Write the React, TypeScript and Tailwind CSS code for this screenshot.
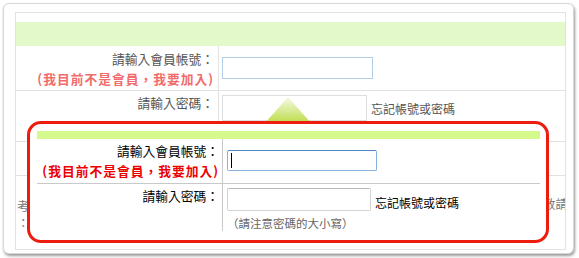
const font = "font-['Noto_Sans_CJK_TC','Noto_Sans_CJK_SC',sans-serif]";

function Caret() {
  return <div className="ml-[3px] mt-[2px] h-[15px] w-px bg-black" />;
}

// faded form underneath the callout
function BackForm() {
  return (
    <div className="flex h-[238px] w-[551px] flex-col border border-[#e2e2e2] bg-white">
      <div className="h-[9px]" />
      <div className="h-[24px] bg-[#e4f9c9]" />
      <div className="grid h-[45px] grid-cols-[203px_1fr] border-b border-[#e2e2e2]">
        <div className="border-r border-[#e2e2e2] pr-[4px] pt-[3px] text-right text-[12.75px] leading-[20px]">
          <div className="text-[#555]">請輸入會員帳號：</div>
          <div className="font-bold tracking-[1px] text-[#f26b6b]">(我目前不是會員，我要加入)</div>
        </div>
        <div className="pl-[3px] pt-[11px]">
          <div className="h-[22px] w-[151px] border border-[#b3cde6] bg-white" />
        </div>
      </div>
      <div className="grid h-[51px] grid-cols-[203px_1fr] border-b border-[#e2e2e2]">
        <div className="border-r border-[#e2e2e2] pr-[4px] pt-[2px] text-right text-[12.75px] leading-[20px] text-[#555]">
          請輸入密碼：
        </div>
        <div className="flex items-start pl-[3px] pt-[4px]">
          <div className="h-[26px] w-[145px] border border-[#dedede] bg-white" />
          <span className="ml-[4px] mt-[6px] text-[12px] leading-[16px] text-[#555]">忘記帳號或密碼</span>
        </div>
      </div>
      <div className="h-[34px] border-b border-[#e2e2e2]" />
      <div className="flex flex-1 justify-between overflow-hidden pt-[21px] text-[12.5px] leading-[17px] text-[#777]">
        <div className="pl-[1px]">
          <div>考</div>
          <div>：(</div>
        </div>
        <div className="-mr-[3px] -mt-[2px] whitespace-nowrap">敦請</div>
      </div>
    </div>
  );
}

function Pointer() {
  return (
    <svg className="absolute left-[265px] top-[97px]" width="46" height="26" viewBox="0 0 46 26">
      <defs>
        <linearGradient id="tri" x1="0" y1="0" x2="0" y2="1">
          <stop offset="0" stopColor="#f6fae6" />
          <stop offset="1" stopColor="#bcdc48" />
        </linearGradient>
      </defs>
      <polygon points="23,0 46,26 0,26" fill="url(#tri)" />
    </svg>
  );
}

function Callout() {
  return (
    <div className="absolute left-[27px] top-[121px] h-[122px] w-[522px] rounded-[14px] border-[3px] border-[#ee1c0c] bg-white pl-[7px] pr-[6px] pt-[7px]">
      <div className="h-[8px] bg-[#d5f98b]" />
      <div className="grid h-[45px] grid-cols-[186px_1fr] border-b border-[#c9c9c9]">
        <div className="border-r border-[#c9c9c9] pr-[3px] pt-[2px] text-right text-[12.75px] leading-[20px]">
          <div className="text-black">請輸入會員帳號：</div>
          <div className="font-bold tracking-[1px] text-[#ee0000]">(我目前不是會員，我要加入)</div>
        </div>
        <div className="pl-[4px] pt-[11px]">
          <div className="flex h-[21px] w-[150px] rounded-[2px] border border-[#88b2dc] border-t-[#4f86c4] bg-white">
            <Caret />
          </div>
        </div>
      </div>
      <div className="grid h-[47px] grid-cols-[186px_1fr]">
        <div className="border-r border-[#c9c9c9] pr-[3px] pt-[2px] text-right text-[12.75px] leading-[20px] text-black">
          請輸入密碼：
        </div>
        <div className="pl-[4px] pt-[4px]">
          <div className="flex items-end">
            <div className="h-[23px] w-[144px] rounded-[2px] border border-[#d3d3d3] border-t-[#b9b9b9] bg-white" />
            <span className="ml-[4px] text-[12px] leading-[16px] text-black">忘記帳號或密碼</span>
          </div>
          <div className="mt-[4px] text-[11.5px] leading-[16px] text-[#666]">（請注意密碼的大小寫）</div>
        </div>
      </div>
    </div>
  );
}

export default function App() {
  return (
    <div className={`relative h-[258px] w-[579px] overflow-hidden bg-white ${font}`}>
      <div className="ml-[3px] mt-[3px] h-[251px] w-[571px] rounded-[6px] border border-[#d6d6d6] bg-white pl-[11px] pt-[8px] shadow-[1px_2px_3px_rgba(0,0,0,0.4)]">
        <BackForm />
      </div>
      <Pointer />
      <Callout />
    </div>
  );
}
